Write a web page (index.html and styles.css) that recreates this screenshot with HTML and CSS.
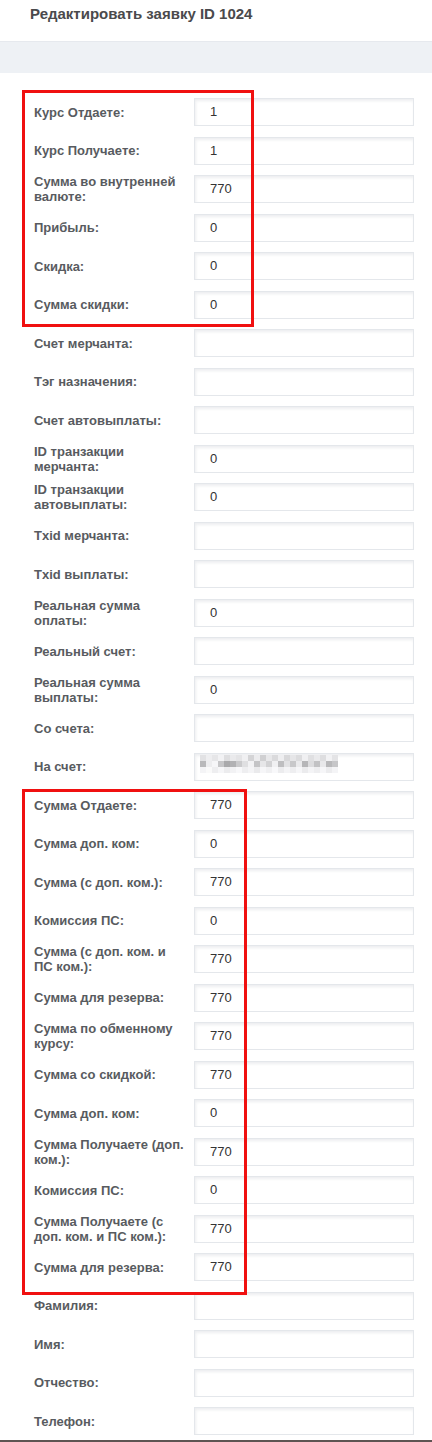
FILE: index.html
```html
<!DOCTYPE html>
<html lang="ru">
<head>
<meta charset="utf-8">
<title>Редактировать заявку ID 1024</title>
<link rel="stylesheet" href="styles.css">
</head>
<body>
<div class="page">
  <h1 class="title">Редактировать заявку ID 1024</h1>
  <div class="band"></div>
  <div class="form">
    <div class="row"><label class="lbl">Курс Отдаете:</label><div class="inp">1</div></div>
    <div class="row"><label class="lbl">Курс Получаете:</label><div class="inp">1</div></div>
    <div class="row"><label class="lbl">Сумма во внутренней валюте:</label><div class="inp">770</div></div>
    <div class="row"><label class="lbl">Прибыль:</label><div class="inp">0</div></div>
    <div class="row"><label class="lbl">Скидка:</label><div class="inp">0</div></div>
    <div class="row"><label class="lbl">Сумма скидки:</label><div class="inp">0</div></div>
    <div class="row"><label class="lbl">Счет мерчанта:</label><div class="inp"></div></div>
    <div class="row"><label class="lbl">Тэг назначения:</label><div class="inp"></div></div>
    <div class="row"><label class="lbl">Счет автовыплаты:</label><div class="inp"></div></div>
    <div class="row"><label class="lbl">ID транзакции мерчанта:</label><div class="inp">0</div></div>
    <div class="row"><label class="lbl">ID транзакции автовыплаты:</label><div class="inp">0</div></div>
    <div class="row"><label class="lbl">Txid мерчанта:</label><div class="inp"></div></div>
    <div class="row"><label class="lbl">Txid выплаты:</label><div class="inp"></div></div>
    <div class="row"><label class="lbl">Реальная сумма оплаты:</label><div class="inp">0</div></div>
    <div class="row"><label class="lbl">Реальный счет:</label><div class="inp"></div></div>
    <div class="row"><label class="lbl">Реальная сумма выплаты:</label><div class="inp">0</div></div>
    <div class="row"><label class="lbl">Со счета:</label><div class="inp"></div></div>
    <div class="row"><label class="lbl">На счет:</label><div class="inp inp-blur">
      <svg class="mosaic" width="138" height="18" viewBox="0 0 138 18" aria-hidden="true">
        <g>
          <rect x="0" y="0" width="6" height="6" fill="#e2e2e4"/><rect x="6" y="0" width="6" height="6" fill="#eeeef0"/><rect x="12" y="0" width="6" height="6" fill="#e6e6e8"/><rect x="18" y="0" width="6" height="6" fill="#f2f2f4"/><rect x="24" y="0" width="6" height="6" fill="#dedee0"/><rect x="30" y="0" width="6" height="6" fill="#eaeaec"/><rect x="36" y="0" width="6" height="6" fill="#e4e4e6"/><rect x="42" y="0" width="6" height="6" fill="#f0f0f2"/><rect x="48" y="0" width="6" height="6" fill="#d4d4d6"/><rect x="54" y="0" width="6" height="6" fill="#ececee"/><rect x="60" y="0" width="6" height="6" fill="#d0d0d2"/><rect x="66" y="0" width="6" height="6" fill="#e8e8ea"/><rect x="72" y="0" width="6" height="6" fill="#dadadc"/><rect x="78" y="0" width="6" height="6" fill="#eeeef0"/><rect x="84" y="0" width="6" height="6" fill="#d8d8da"/><rect x="90" y="0" width="6" height="6" fill="#e6e6e8"/><rect x="96" y="0" width="6" height="6" fill="#dcdcde"/><rect x="102" y="0" width="6" height="6" fill="#f0f0f2"/><rect x="108" y="0" width="6" height="6" fill="#e0e0e2"/><rect x="114" y="0" width="6" height="6" fill="#eaeaec"/><rect x="120" y="0" width="6" height="6" fill="#dedee0"/><rect x="126" y="0" width="6" height="6" fill="#f2f2f4"/><rect x="132" y="0" width="6" height="6" fill="#e4e4e6"/>
          <rect x="0" y="6" width="6" height="6" fill="#b9b9bb"/><rect x="6" y="6" width="6" height="6" fill="#ededef"/><rect x="12" y="6" width="6" height="6" fill="#f6f6f8"/><rect x="18" y="6" width="6" height="6" fill="#c6c6c8"/><rect x="24" y="6" width="6" height="6" fill="#a9a9ab"/><rect x="30" y="6" width="6" height="6" fill="#b2b2b4"/><rect x="36" y="6" width="6" height="6" fill="#cacacc"/><rect x="42" y="6" width="6" height="6" fill="#dfdfe1"/><rect x="48" y="6" width="6" height="6" fill="#f2f2f4"/><rect x="54" y="6" width="6" height="6" fill="#c4c4c6"/><rect x="60" y="6" width="6" height="6" fill="#e6e6e8"/><rect x="66" y="6" width="6" height="6" fill="#d2d2d4"/><rect x="72" y="6" width="6" height="6" fill="#f0f0f2"/><rect x="78" y="6" width="6" height="6" fill="#bebec0"/><rect x="84" y="6" width="6" height="6" fill="#e2e2e4"/><rect x="90" y="6" width="6" height="6" fill="#c8c8ca"/><rect x="96" y="6" width="6" height="6" fill="#eaeaec"/><rect x="102" y="6" width="6" height="6" fill="#b6b6b8"/><rect x="108" y="6" width="6" height="6" fill="#dcdcde"/><rect x="114" y="6" width="6" height="6" fill="#c2c2c4"/><rect x="120" y="6" width="6" height="6" fill="#e8e8ea"/><rect x="126" y="6" width="6" height="6" fill="#b8b8ba"/><rect x="132" y="6" width="6" height="6" fill="#c6c6c8"/>
          <rect x="0" y="12" width="6" height="6" fill="#f4f4f6"/><rect x="6" y="12" width="6" height="6" fill="#fafafa"/><rect x="12" y="12" width="6" height="6" fill="#eeeef0"/><rect x="18" y="12" width="6" height="6" fill="#f6f6f8"/><rect x="24" y="12" width="6" height="6" fill="#ececee"/><rect x="30" y="12" width="6" height="6" fill="#f2f2f4"/><rect x="36" y="12" width="6" height="6" fill="#f8f8fa"/><rect x="42" y="12" width="6" height="6" fill="#eeeef0"/><rect x="48" y="12" width="6" height="6" fill="#f4f4f6"/><rect x="54" y="12" width="6" height="6" fill="#eaeaec"/><rect x="60" y="12" width="6" height="6" fill="#f6f6f8"/><rect x="66" y="12" width="6" height="6" fill="#f0f0f2"/><rect x="72" y="12" width="6" height="6" fill="#f8f8fa"/><rect x="78" y="12" width="6" height="6" fill="#ececee"/><rect x="84" y="12" width="6" height="6" fill="#f4f4f6"/><rect x="90" y="12" width="6" height="6" fill="#eeeef0"/><rect x="96" y="12" width="6" height="6" fill="#f6f6f8"/><rect x="102" y="12" width="6" height="6" fill="#ebebed"/><rect x="108" y="12" width="6" height="6" fill="#f4f4f6"/><rect x="114" y="12" width="6" height="6" fill="#eeeef0"/><rect x="120" y="12" width="6" height="6" fill="#f6f6f8"/><rect x="126" y="12" width="6" height="6" fill="#ececee"/><rect x="132" y="12" width="6" height="6" fill="#f4f4f6"/>
        </g>
      </svg>
    </div></div>
    <div class="row"><label class="lbl">Сумма Отдаете:</label><div class="inp">770</div></div>
    <div class="row"><label class="lbl">Сумма доп. ком:</label><div class="inp">0</div></div>
    <div class="row"><label class="lbl">Сумма (с доп. ком.):</label><div class="inp">770</div></div>
    <div class="row"><label class="lbl">Комиссия ПС:</label><div class="inp">0</div></div>
    <div class="row"><label class="lbl">Сумма (с доп. ком. и ПС ком.):</label><div class="inp">770</div></div>
    <div class="row"><label class="lbl">Сумма для резерва:</label><div class="inp">770</div></div>
    <div class="row"><label class="lbl">Сумма по обменному курсу:</label><div class="inp">770</div></div>
    <div class="row"><label class="lbl">Сумма со скидкой:</label><div class="inp">770</div></div>
    <div class="row"><label class="lbl">Сумма доп. ком:</label><div class="inp">0</div></div>
    <div class="row"><label class="lbl">Сумма Получаете (доп. ком.):</label><div class="inp">770</div></div>
    <div class="row"><label class="lbl">Комиссия ПС:</label><div class="inp">0</div></div>
    <div class="row"><label class="lbl">Сумма Получаете (с доп. ком. и ПС ком.):</label><div class="inp">770</div></div>
    <div class="row"><label class="lbl">Сумма для резерва:</label><div class="inp">770</div></div>
    <div class="row"><label class="lbl">Фамилия:</label><div class="inp"></div></div>
    <div class="row"><label class="lbl">Имя:</label><div class="inp"></div></div>
    <div class="row"><label class="lbl">Отчество:</label><div class="inp"></div></div>
    <div class="row"><label class="lbl">Телефон:</label><div class="inp"></div></div>
  </div>
  <div class="bottom-line"></div>
  <div class="mark mark-1"></div>
  <div class="mark mark-2"></div>
</div>
</body>
</html>
```
FILE: styles.css
```css
html, body {
  margin: 0;
  padding: 0;
  background: #ffffff;
}
body {
  font-family: "Liberation Sans", Arial, sans-serif;
}
.page {
  position: relative;
  width: 432px;
  height: 1442px;
  overflow: hidden;
}
.title {
  margin: 0;
  height: 41px;
  box-sizing: border-box;
  padding: 5px 0 0 30px;
  font-size: 15px;
  line-height: 17px;
  font-weight: bold;
  color: #4a4a4c;
}
.band {
  height: 32px;
  background: #eef1f5;
  border-top: 1px solid #e6e9ee;
  box-sizing: border-box;
}
.form {
  display: flex;
  flex-direction: column;
  gap: 10.5px;
  padding: 25px 0 0 34px;
}
.row {
  display: flex;
  align-items: center;
  height: 28px;
}
.lbl {
  width: 152px;
  margin-right: 8px;
  font-size: 13px;
  line-height: 15px;
  font-weight: bold;
  color: #585b60;
}
.inp {
  width: 220px;
  height: 28px;
  box-sizing: border-box;
  border: 1px solid #e4e7eb;
  background: #ffffff;
  box-shadow: inset 1px 2px 3px rgba(30, 40, 60, 0.08);
  padding-left: 15px;
  font-size: 13px;
  line-height: 26px;
  color: #333333;
}
.inp-blur {
  padding-left: 5px;
  padding-top: 1px;
  line-height: 0;
}
.mosaic {
  display: block;
}
.bottom-line {
  position: absolute;
  left: 0;
  right: 0;
  bottom: 0;
  height: 2px;
  background: #5e5452;
}
.mark {
  position: absolute;
  border: 3px solid #f01010;
  box-sizing: border-box;
}
.mark-1 {
  left: 22px;
  top: 90px;
  width: 232px;
  height: 237px;
}
.mark-2 {
  left: 22px;
  top: 789px;
  width: 225px;
  height: 506px;
}
```
